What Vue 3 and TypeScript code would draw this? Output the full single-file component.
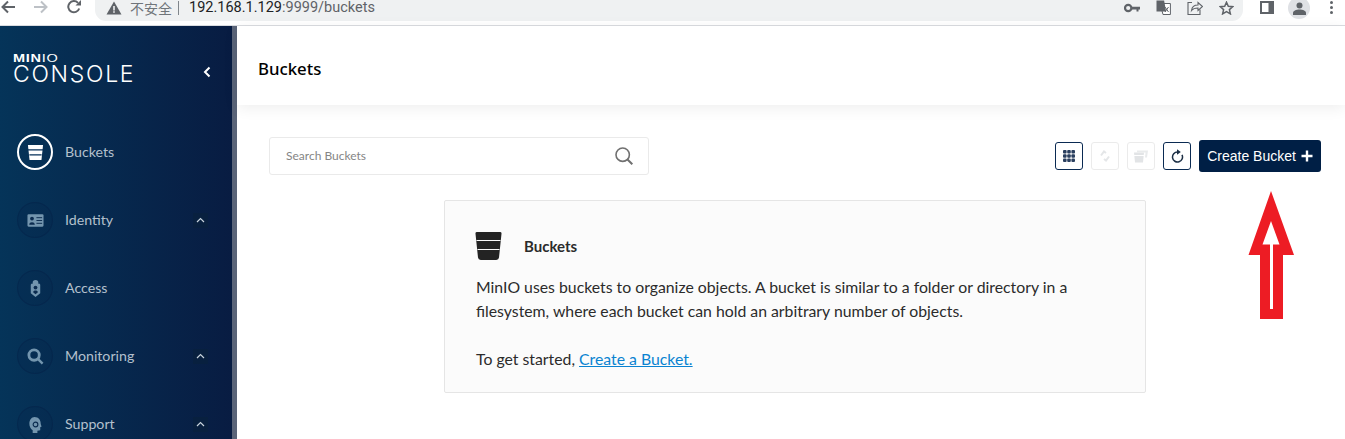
<template>
	<div class="page">
		<div class="browser-bar">
			<svg class="nav-icon" width="16" height="16" viewBox="0 0 16 16"><path d="M15 8H3M8 2.500 2.500 8 8 13.500" fill="none" stroke="#5f6368" stroke-width="2" /></svg>
			<svg class="nav-icon" width="16" height="16" viewBox="0 0 16 16"><path d="M1 8h12M8 2.500 13.500 8 8 13.500" fill="none" stroke="#bdc1c6" stroke-width="2" /></svg>
			<svg class="nav-icon" width="16" height="16" viewBox="0 0 16 16"><path d="M13.200 9.500A5.600 5.600 0 1 1 12 3.900" fill="none" stroke="#5f6368" stroke-width="2" /><path d="M9.500 6.500h5.500V1z" fill="#5f6368" /></svg>
			<div class="omnibox">
				<svg width="16" height="14" viewBox="0 0 16 14"><path d="M8 0.500 15.500 13.500H.5z" fill="#5f6368" /><path d="M7.200 5h1.600v4.400H7.200zM7.200 10.200h1.600v1.600H7.200z" fill="#eff1f2" /></svg>
				<span class="insecure">不安全</span>
				<span class="divider"></span>
				<span class="url"><span class="host">192.168.1.129</span>:9999/buckets</span>
				<span class="spacer"></span>
				<svg class="omni-icon" width="16" height="10" viewBox="0 0 16 10"><circle cx="4.200" cy="5" r="3.200" fill="none" stroke="#5f6368" stroke-width="2.200" /><path d="M7 3.800h9v2.600h-1.500v2h-2v-2H7z" fill="#5f6368" /></svg>
				<svg class="omni-icon" width="15" height="15" viewBox="0 0 15 15"><path d="M4 3.500h10.400v11H7z" fill="#fff" stroke="#5f6368" /><path d="M.5.500h7.600l2 11H.5z" fill="#5f6368" /><path d="M9 7l3.500 5M12.500 7 9 12" stroke="#5f6368" stroke-width="1" /></svg>
				<svg class="omni-icon" width="16" height="15" viewBox="0 0 16 15"><path d="M5 2.500H1v12h12v-5" fill="none" stroke="#5f6368" stroke-width="1.100" /><path d="M4.500 10.500c.5-4 3.500-5.500 6.500-5.500V2.500l4.500 4-4.500 4V8c-3 0-5 .6-6.500 2.500z" fill="none" stroke="#5f6368" stroke-width="1.100" /></svg>
				<svg class="omni-icon" width="15" height="14" viewBox="0 0 15 14"><path d="M7.500 1.200 9.300 5.300l4.400.4-3.300 2.900 1 4.300-3.900-2.300-3.900 2.300 1-4.300L1.300 5.700l4.400-.4z" fill="none" stroke="#5f6368" stroke-width="1.500" /></svg>
			</div>
			<svg class="panel-icon" width="14" height="13" viewBox="0 0 14 13"><path d="M0 0h14v13H0z" fill="#5f6368" /><path d="M2 2h6.500v9H2z" fill="#fff" /></svg>
			<div class="avatar">
				<svg width="13" height="13" viewBox="0 0 13 13"><circle cx="6.500" cy="3.500" r="3" fill="#5f6368" /><path d="M0 13v-2c0-2 3-3.500 6.500-3.500S13 9 13 11v2z" fill="#5f6368" /></svg>
			</div>
			<div class="kebab"><i></i><i></i><i></i></div>
		</div>

		<div class="app-body">
			<aside class="sidebar">
				<div class="brand">
					<div class="logo">
						<div class="logo-top"><b>MIN</b>IO</div>
						<div class="logo-name">CONSOLE</div>
					</div>
					<svg width="10" height="12" viewBox="0 0 10 12"><path d="M7.500 1.500 3 6l4.500 4.500" fill="none" stroke="#fff" stroke-width="2" /></svg>
				</div>
				<nav class="menu">
					<div v-for="item in menu" :key="item.label" class="menu-row" :class="{ active: item.active }">
						<span class="menu-circle">
							<svg width="17" height="17" viewBox="0 0 18 18" v-html="item.icon"></svg>
						</span>
						<span class="menu-label">{{ item.label }}</span>
						<span v-if="item.expandable" class="chevron">
							<svg width="9" height="6" viewBox="0 0 9 6"><path d="M1 5 4.500 1.500 8 5" fill="none" stroke="#c8d3dd" stroke-width="1.200" /></svg>
						</span>
					</div>
				</nav>
			</aside>
			<div class="sidebar-edge"></div>

			<main class="main">
				<header class="page-header">Buckets</header>
				<div class="content">
					<div class="toolbar">
						<div class="search">
							<span class="search-text">Search Buckets</span>
							<svg width="18" height="18" viewBox="0 0 18 18"><circle cx="7.700" cy="7.700" r="6.700" fill="none" stroke="#707070" stroke-width="1.600" /><path d="M12.500 12.500 17.300 17.300" stroke="#707070" stroke-width="2" /></svg>
						</div>
						<div class="actions">
							<button class="icon-btn">
								<svg width="12" height="12" viewBox="0 0 12 12">
									<rect v-for="cell in gridCells" :key="cell.id" :x="cell.x" :y="cell.y" width="3.600" height="3.600" rx="1" fill="#2a3f5f" />
								</svg>
							</button>
							<button class="icon-btn disabled">
								<svg width="14" height="14" viewBox="0 0 14 14"><path d="M3 6.500 6 2.500l2 1.500M11 7.500 8 11.500 6 10" fill="none" stroke="#e4e6e8" stroke-width="2" /></svg>
							</button>
							<button class="icon-btn disabled">
								<svg width="16" height="14" viewBox="0 0 16 14"><path d="M1 3.500h10l-1 10H2z" fill="#e2e4e6" /><path d="M1 6.500h10" stroke="#fff" /><path d="M4 1.500h11l-1 7h-2l.6-5H4z" fill="#e9ebec" /></svg>
							</button>
							<button class="icon-btn">
								<svg width="13" height="14" viewBox="0 0 13 14"><path d="M6.500 3A5 5 0 1 0 11 5.800" fill="none" stroke="#1c2f45" stroke-width="1.500" /><path d="M6 0.200v5.600l3.800-2.800z" fill="#1c2f45" /></svg>
							</button>
							<button class="create-btn">
								Create Bucket
								<svg width="12" height="12" viewBox="0 0 12 12"><path d="M6 0.500v11M.5 6h11" stroke="#fff" stroke-width="2.400" /></svg>
							</button>
						</div>
					</div>

					<section class="help-box">
						<div class="help-title">
							<svg width="27" height="28" viewBox="0 0 26 28">
								<path d="M1.500 0h23A1.500 1.500 0 0 1 26 1.700L23.500 25.500A2.800 2.800 0 0 1 20.700 28H5.300a2.800 2.800 0 0 1-2.800-2.500L0 1.700A1.500 1.500 0 0 1 1.500 0z" fill="#232323" />
								<path d="M1 8.500h24M2 17.500h22" stroke="#fafafa" stroke-width="1.100" />
							</svg>
							<span>Buckets</span>
						</div>
						<p>MinIO uses buckets to organize objects. A bucket is similar to a folder or directory in a filesystem, where each bucket can hold an arbitrary number of objects.</p>
						<p>To get started, <a href="#">Create a Bucket.</a></p>
					</section>
				</div>
			</main>
		</div>

		<!-- annotation drawn over the screenshot -->
		<svg class="annotation" width="48" height="130" viewBox="0 0 48 130">
			<path d="M23 1 46 65H35V129H12V65H0.500z" fill="#ed1c24" />
			<path d="M23 31 31.500 54.500H25V119H22V54.500H14.500z" fill="#fff" />
		</svg>
	</div>
</template>

<script setup lang="ts">
interface MenuItem {
	label: string;
	icon: string;
	active?: boolean;
	expandable?: boolean;
}

const menu: MenuItem[] = [
	{
		label: 'Buckets',
		active: true,
		icon: '<path d="M1 1h16l-1.700 16H2.700z" fill="#fff"/><path d="M1 6.200h16M2.500 11.500h13" stroke="#06305a" stroke-width="1.100"/>',
	},
	{
		label: 'Identity',
		expandable: true,
		icon: '<rect x="0.500" y="2.500" width="17" height="13" rx="1.200" fill="#7395ae"/><circle cx="5.300" cy="7" r="2" fill="#0b2b4f"/><path d="M2.300 13.500c0-3.500 6-3.500 6 0z" fill="#0b2b4f"/><path d="M10 6h6M10 9h6M10 12h6" stroke="#0b2b4f"/>',
	},
	{
		label: 'Access',
		icon: '<path d="M6 4V3a3 3 0 0 1 6 0v1h1.500l.5 1v9l-5 4-5-4V5l.5-1z" fill="#7395ae"/><circle cx="9" cy="8" r="2" fill="#0b2b4f"/><path d="M6.500 13c0-2.500 5-2.500 5 0l-2.500 2z" fill="#0b2b4f"/>',
	},
	{
		label: 'Monitoring',
		expandable: true,
		icon: '<circle cx="7.500" cy="7.500" r="5.500" fill="none" stroke="#7395ae" stroke-width="3"/><path d="M11.500 11.500 16.500 16.500" stroke="#7395ae" stroke-width="2.500"/><path d="M5 8h1.500l1-2 1 3 .7-1" fill="none" stroke="#0b2b4f" stroke-width=".8"/>',
	},
	{
		label: 'Support',
		expandable: true,
		icon: '<path d="M8 1c4 0 6.500 3 6.500 7 0 1 .5 2 1 3l-1.500 1v3l-3 .5V18H6v-3C3.500 13.500 2.500 11 2.500 8 2.500 4 5 1 8 1z" fill="#7395ae"/><circle cx="9" cy="9" r="2.500" fill="none" stroke="#0b2b4f" stroke-width="1.200"/>',
	},
];

// 3x3 dots of the bucket list toggle
const gridCells = Array.from({ length: 9 }, (_, id) => ({
	id,
	x: (id % 3) * 4.200,
	y: Math.floor(id / 3) * 4.200,
}));
</script>

<style>
html,
body {
	margin: 0;
	overflow: hidden;
	background: #fff;
}
</style>

<style scoped>
.page {
	position: relative;
	width: 1345px;
	height: 439px;
	overflow: hidden;
	display: flex;
	flex-direction: column;
	font-family: Lato, "Liberation Sans", sans-serif;
}

.browser-bar {
	height: 25px;
	flex: none;
	display: flex;
	align-items: flex-start;
	background: #fff;
	border-bottom: 1px solid #dadce0;
}

.nav-icon {
	flex: none;
	margin-top: -1px;
	margin-right: 17px;
}

.nav-icon:nth-child(3) {
	margin-right: 13px;
}

.omnibox {
	width: 1148px;
	height: 21px;
	flex: none;
	display: flex;
	align-items: center;
	background: #eff1f2;
	border-radius: 0 0 11px 11px;
	padding: 0 9px 6px 11px;
	box-sizing: border-box;
	font-size: 14px;
	color: #5f6368;
}

.insecure {
	margin-left: 8px;
	font-family: "Noto Sans CJK SC", sans-serif;
	font-size: 14px;
	line-height: 14px;
	color: #70757a;
}

.divider {
	width: 1px;
	height: 14px;
	margin: 0 10px 0 6px;
	background: #80868b;
}

.url {
	font-family: Roboto, sans-serif;
	font-size: 14.500px;
	line-height: 14px;
	color: #5f6368;
}

.host {
	color: #202124;
}

.spacer {
	flex: 1;
}

.omni-icon {
	margin-left: 16px;
}

.panel-icon {
	margin: 1px 0 0 17px;
	flex: none;
}

.avatar {
	width: 22px;
	height: 22px;
	margin: -3px 0 0 14px;
	border-radius: 50%;
	background: #dfe1e5;
	display: flex;
	align-items: center;
	justify-content: center;
}

.kebab {
	display: flex;
	flex-direction: column;
	gap: 2px;
	margin: 1px 0 0 20px;
}

.kebab i {
	width: 3px;
	height: 3px;
	border-radius: 50%;
	background: #5f6368;
}

.app-body {
	flex: 1;
	min-height: 0;
	display: flex;
}

.sidebar {
	width: 232px;
	flex: none;
	background: linear-gradient(90deg, #053459 0%, #081c42 100%);
	overflow: hidden;
}

.sidebar-edge {
	width: 5px;
	flex: none;
	background: #5a6478;
}

.brand {
	height: 92px;
	padding: 27px 20px 0 13px;
	box-sizing: border-box;
	display: flex;
	justify-content: space-between;
	align-items: flex-start;
	color: #fff;
}

.brand svg {
	margin-top: 13px;
}

.logo-top {
	font-family: "Liberation Sans", sans-serif;
	font-size: 10px;
	line-height: 11px;
	letter-spacing: 0.5px;
	transform-origin: left;
	transform: scaleX(1.450);
}

.logo-name {
	margin-top: 1px;
	font-family: Inter, "Open Sans", sans-serif;
	font-weight: 300;
	font-size: 23px;
	line-height: 19px;
	letter-spacing: 1.700px;
}

.menu-row {
	height: 68px;
	padding-left: 17px;
	display: flex;
	align-items: center;
	color: #b3c0cd;
	font-size: 14.200px;
}

.menu-label {
	padding-bottom: 2px;
}

.menu-circle {
	width: 36px;
	height: 36px;
	margin-right: 12px;
	box-sizing: border-box;
	border: 1px solid rgba(8, 28, 66, 0.3);
	border-radius: 50%;
	background: rgba(8, 28, 66, 0.16);
	display: flex;
	align-items: center;
	justify-content: center;
}

.active .menu-circle {
	background: transparent;
	border: 2px solid #fff;
}

.chevron {
	width: 15px;
	height: 15px;
	margin-left: auto;
	margin-right: 24px;
	background: #08203f;
	display: flex;
	align-items: center;
	justify-content: center;
}

.main {
	flex: 1;
	min-width: 0;
	display: flex;
	flex-direction: column;
}

.page-header {
	height: 79px;
	flex: none;
	box-sizing: border-box;
	padding: 6px 0 0 21px;
	display: flex;
	align-items: center;
	font-family: "Noto Sans", "Open Sans", sans-serif;
	font-size: 16.800px;
	font-weight: 500;
	color: #000;
	box-shadow: 0 3px 14px rgba(0, 0, 0, 0.07);
}

.content {
	padding: 32px 24px 0 32px;
}

.toolbar {
	display: flex;
	justify-content: space-between;
	align-items: center;
	height: 38px;
}

.search {
	width: 380px;
	height: 38px;
	box-sizing: border-box;
	padding: 0 15px 0 16px;
	border: 1px solid #eaeaea;
	border-radius: 3px;
	display: flex;
	align-items: center;
	justify-content: space-between;
	font-size: 12px;
	color: #858585;
}

.search-text {
	padding-bottom: 2px;
}

.actions {
	display: flex;
	align-items: center;
	gap: 8px;
}

.icon-btn {
	width: 28px;
	height: 28px;
	padding: 0;
	background: #fff;
	border: 1px solid #0a2a52;
	border-radius: 3px;
	display: flex;
	align-items: center;
	justify-content: center;
}

.icon-btn.disabled {
	border-color: #ebebeb;
}

.create-btn {
	width: 122px;
	height: 32px;
	padding: 0;
	border: 0;
	border-radius: 3px;
	background: #001f45;
	color: #fff;
	font-family: "Liberation Sans", sans-serif;
	font-size: 14px;
	display: flex;
	align-items: center;
	justify-content: center;
	gap: 5px;
}

.help-box {
	width: 702px;
	height: 193px;
	box-sizing: border-box;
	margin: 25px auto 0;
	padding: 31px 31px 0;
	background: #fbfbfb;
	border: 1px solid #e5e5e5;
	border-radius: 2px;
	font-size: 15.800px;
	line-height: 24px;
	color: #2b2b2b;
}

.help-title {
	display: flex;
	align-items: center;
	gap: 22px;
	height: 28px;
	margin-left: -1px;
	font-weight: 700;
	font-size: 15px;
}

.help-box p {
	margin: 15px 0 0;
}

.help-box p + p {
	margin-top: 24px;
}

.help-box a {
	color: #0a83d1;
}

.annotation {
	position: absolute;
	left: 1248px;
	top: 190px;
}
</style>
